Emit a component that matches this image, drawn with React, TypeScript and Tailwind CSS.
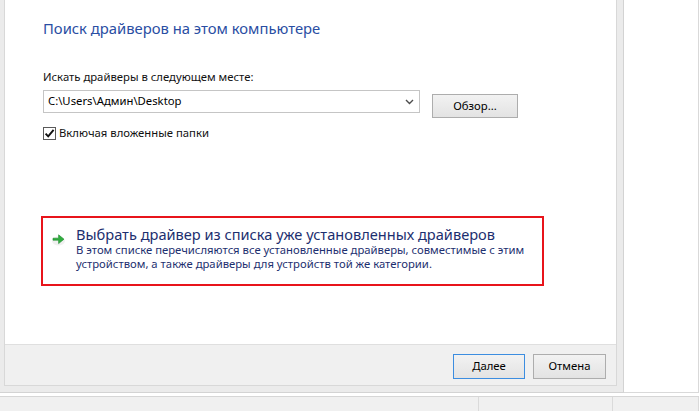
import React from 'react';

const font = { fontFamily: '"Noto Sans", "Segoe UI", sans-serif' };

const Chevron = () => (
  <svg width="9" height="6" viewBox="0 0 9 6" className="shrink-0">
    <path d="M1 1 L4.5 4.5 L8 1" fill="none" stroke="#4d4d4d" strokeWidth="1.4" />
  </svg>
);

const GreenArrow = () => (
  <svg width="14" height="13" viewBox="0 0 14 13" className="shrink-0">
    <ellipse cx="6.5" cy="8" rx="6.5" ry="4.5" fill="#000" opacity="0.06" />
    <path d="M1 5.2 H6.6 V1.8 L12 6.2 L6.6 10.6 V7.2 H1 Z" fill="#2fae3f" stroke="#1f8a2c" strokeWidth="0.6" />
  </svg>
);

const WinButton = ({ label, primary, w, h = 'h-[25px]' }: { label: string; primary?: boolean; w: string; h?: string }) => (
  <button
    className={`${w} ${h} text-[11.3px] text-black border bg-gradient-to-b from-[#f2f2f2] to-[#e3e3e3] ${
      primary ? 'border-[#3c8de0]' : 'border-[#adadad]'
    }`}
  >
    {label}
  </button>
);

export default function App() {
  return (
    <div className="w-[699px] h-[411px] flex flex-col bg-white overflow-hidden" style={font}>
      <div className="h-[393px] flex shrink-0">
        {/* dialog frame */}
        <div className="w-[624px] h-full bg-[#ebebeb] border-r border-b border-[#d3d3d3] pl-[4px] pr-[6px] pb-[6px] flex">
          <div className="flex-1 flex flex-col border-l border-r border-b border-[#d8d8d8]">
            <div className="flex-1 bg-white pl-[38px] pt-[18px]">
              <h1 className="text-[14.8px] leading-[20px] text-[#2a4ea3]">Поиск драйверов на этом компьютере</h1>

              <div className="mt-[31px] text-[11.3px] leading-[16px] text-[#111]">Искать драйверы в следующем месте:</div>

              <div className="mt-[5px] flex items-start gap-[12px]">
                <div className="w-[377px] h-[23px] border border-[#c5c5c5] flex items-center pl-[4px] pr-[5px] justify-between">
                  <span className="text-[11.3px] text-black">C:\Users\Админ\Desktop</span>
                  <Chevron />
                </div>
                <div className="mt-[2px]">
                  <WinButton label="Обзор..." w="w-[86px]" h="h-[24px]" />
                </div>
              </div>

              <div className="mt-[7px] flex items-center gap-[3px]">
                <div className="w-[13px] h-[13px] border border-[#5a5a5a] bg-white flex items-center justify-center">
                  <svg width="11" height="11" viewBox="0 0 11 11">
                    <path d="M1.6 5.6 L4.2 8.3 L9.6 1.8" fill="none" stroke="#111" strokeWidth="1.9" />
                  </svg>
                </div>
                <span className="text-[11.3px] leading-[16px] text-[#111]">Включая вложенные папки</span>
              </div>

              {/* command link, highlighted */}
              <div className="mt-[75px] -ml-[2px] w-[503px] h-[70px] border-2 border-[#e8141b] pl-[9px] pt-[8px] flex gap-[10px]">
                <div className="pt-[7px]">
                  <GreenArrow />
                </div>
                <div className="flex flex-col">
                  <div className="text-[14.6px] leading-[17px] text-[#1d2f6f] whitespace-nowrap">
                    Выбрать драйвер из списка уже установленных драйверов
                  </div>
                  <div className="text-[11.3px] leading-[14px] text-[#1d2f6f] whitespace-nowrap">
                    <div>В этом списке перечисляются все установленные драйверы, совместимые с этим</div>
                    <div>устройством, а также драйверы для устройств той же категории.</div>
                  </div>
                </div>
              </div>
            </div>

            <div className="h-[41px] shrink-0 bg-[#f0f0f0] border-t border-[#dfdfdf] flex justify-end gap-[8px] pt-[9px] pr-[10px]">
              <WinButton label="Далее" primary w="w-[72px]" />
              <WinButton label="Отмена" w="w-[73px]" />
            </div>
          </div>
        </div>
        {/* area behind */}
        <div className="flex-1 bg-white border-r border-b border-[#d9d9d9]" />
      </div>

      <div className="h-[3px] shrink-0 bg-white" />
      <div className="flex-1 flex bg-[#f0f0f0] border-t border-[#d6d6d6]">
        <div className="w-[479px] border-r border-[#dadada]" />
        <div className="w-[134px] border-r border-[#dadada]" />
        <div className="flex-1 border-r border-[#dadada]" />
      </div>
    </div>
  );
}
